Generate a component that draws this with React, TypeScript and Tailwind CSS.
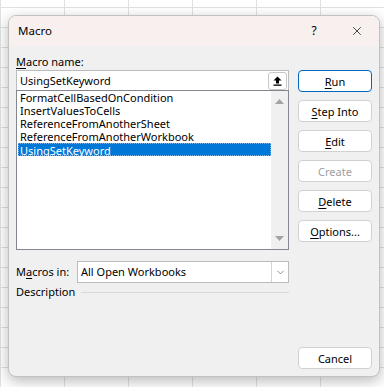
import { ChevronDown, X } from 'lucide-react';

const macros = [
  'FormatCellBasedOnCondition',
  'InsertValuesToCells',
  'ReferenceFromAnotherSheet',
  'ReferenceFromAnotherWorkbook',
  'UsingSetKeyword',
];

const DialogButton = ({
  label,
  hot,
  rest,
  primary,
  disabled,
}: {
  label?: string;
  hot?: string;
  rest?: string;
  primary?: boolean;
  disabled?: boolean;
}) => (
  <button
    className={`h-[22px] w-[74px] rounded-[4px] border bg-white text-[11px] leading-none ${
      primary ? 'border-[#0067c0]' : 'border-[#d1d1d1]'
    } ${disabled ? 'text-[#a0a0a0]' : 'text-black'}`}
  >
    {label ?? (
      <>
        <span className="underline underline-offset-2">{hot}</span>
        {rest}
      </>
    )}
  </button>
);

const App = () => {
  return (
    <div
      className="relative h-[387px] w-[384px] overflow-hidden bg-white bg-[linear-gradient(to_right,#e1e1e1_1px,transparent_1px),linear-gradient(to_bottom,#e1e1e1_1px,transparent_1px)] bg-[size:64px_20px] bg-[position:0px_7px]"
      style={{ fontFamily: '"Noto Sans", "Open Sans", sans-serif' }}
    >
      {/* Dialog window */}
      <div className="absolute left-[8px] top-[15px] flex h-[362px] w-[372px] flex-col overflow-hidden rounded-[8px] border border-[#c2c2c2] bg-[#f0f0f0] shadow-[0_4px_14px_rgba(0,0,0,0.28)]">
        {/* Title bar */}
        <div className="flex h-[30px] items-center bg-[#f7f0ee] pl-[9px] text-[11.5px] text-black">
          <span>Macro</span>
          <span className="ml-auto w-[12px] text-center text-[12px]">?</span>
          <X className="ml-[30px] mr-[15px] h-[14px] w-[14px]" strokeWidth={1.2} />
        </div>

        {/* Body */}
        <div className="flex flex-1 gap-[9px] px-[7px] pt-[7px] pb-[7px] text-[11px] text-black">
          {/* Left column */}
          <div className="flex w-[273px] flex-col">
            <div className="h-[17px] leading-[17px]">
              <span className="underline underline-offset-2">M</span>acro name:
            </div>
            <div className="flex h-[20px] items-center border border-b-0 border-[#bcbcbc] bg-white pl-[3px] pr-[1px]">
              <span className="leading-none">UsingSetKeyword</span>
              <div className="ml-auto flex h-[18px] w-[19px] items-center justify-center rounded-[3px] border border-[#c8c8c8] bg-white">
                <svg width="9" height="10" viewBox="0 0 9 10">
                  <path d="M4.5 0.5 L8.5 4.5 L6 4.5 L6 7.5 L3 7.5 L3 4.5 L0.5 4.5 Z" fill="#000" />
                  <rect x="0.5" y="8.5" width="8" height="1.3" fill="#000" />
                </svg>
              </div>
            </div>
            <div className="flex h-[160px] border border-[#828790] bg-white">
              <div className="flex-1 pl-[1px]">
                {macros.map((m, i) => (
                  <div
                    key={m}
                    className={`h-[13px] leading-[13px] ${
                      i === macros.length - 1
                        ? 'border border-dotted border-[#7fb4e6] bg-[#0078d7] pl-[1px] leading-[11px] text-white'
                        : 'pl-[2px]'
                    }`}
                  >
                    {m}
                  </div>
                ))}
              </div>
              <div className="flex w-[17px] flex-col items-center justify-between bg-[#f0f0f0] py-[8px]">
                <svg width="9" height="5" viewBox="0 0 9 5">
                  <path d="M0 5 L4.5 0 L9 5 Z" fill="#a3a3a3" />
                </svg>
                <svg width="9" height="5" viewBox="0 0 9 5">
                  <path d="M0 0 L9 0 L4.5 5 Z" fill="#a3a3a3" />
                </svg>
              </div>
            </div>

            <div className="mt-[11px] flex h-[22px] items-center">
              <span className="w-[61px]">
                M<span className="underline underline-offset-2">a</span>cros in:
              </span>
              <div className="flex h-[22px] flex-1 items-center border border-[#bcbcbc] bg-white pl-[3px]">
                <span>All Open Workbooks</span>
                <div className="ml-auto flex h-full w-[17px] items-center justify-center border-l border-[#d4d4d4] bg-white">
                  <ChevronDown className="h-[11px] w-[11px] text-[#606060]" strokeWidth={1.5} />
                </div>
              </div>
            </div>

            <div className="flex h-[18px] items-center">
              <span>Description</span>
              <div className="ml-[6px] h-px flex-1 bg-[#d9d9d9]" />
            </div>
          </div>

          {/* Right column */}
          <div className="flex w-[74px] flex-col gap-[8px] pt-[17px]">
            <DialogButton hot="R" rest="un" primary />
            <DialogButton hot="S" rest="tep Into" />
            <DialogButton hot="E" rest="dit" />
            <DialogButton label="Create" disabled />
            <DialogButton hot="D" rest="elete" />
            <DialogButton hot="O" rest="ptions..." />
            <div className="mt-auto">
              <DialogButton label="Cancel" />
            </div>
          </div>
        </div>
      </div>
    </div>
  );
};

export default App;
